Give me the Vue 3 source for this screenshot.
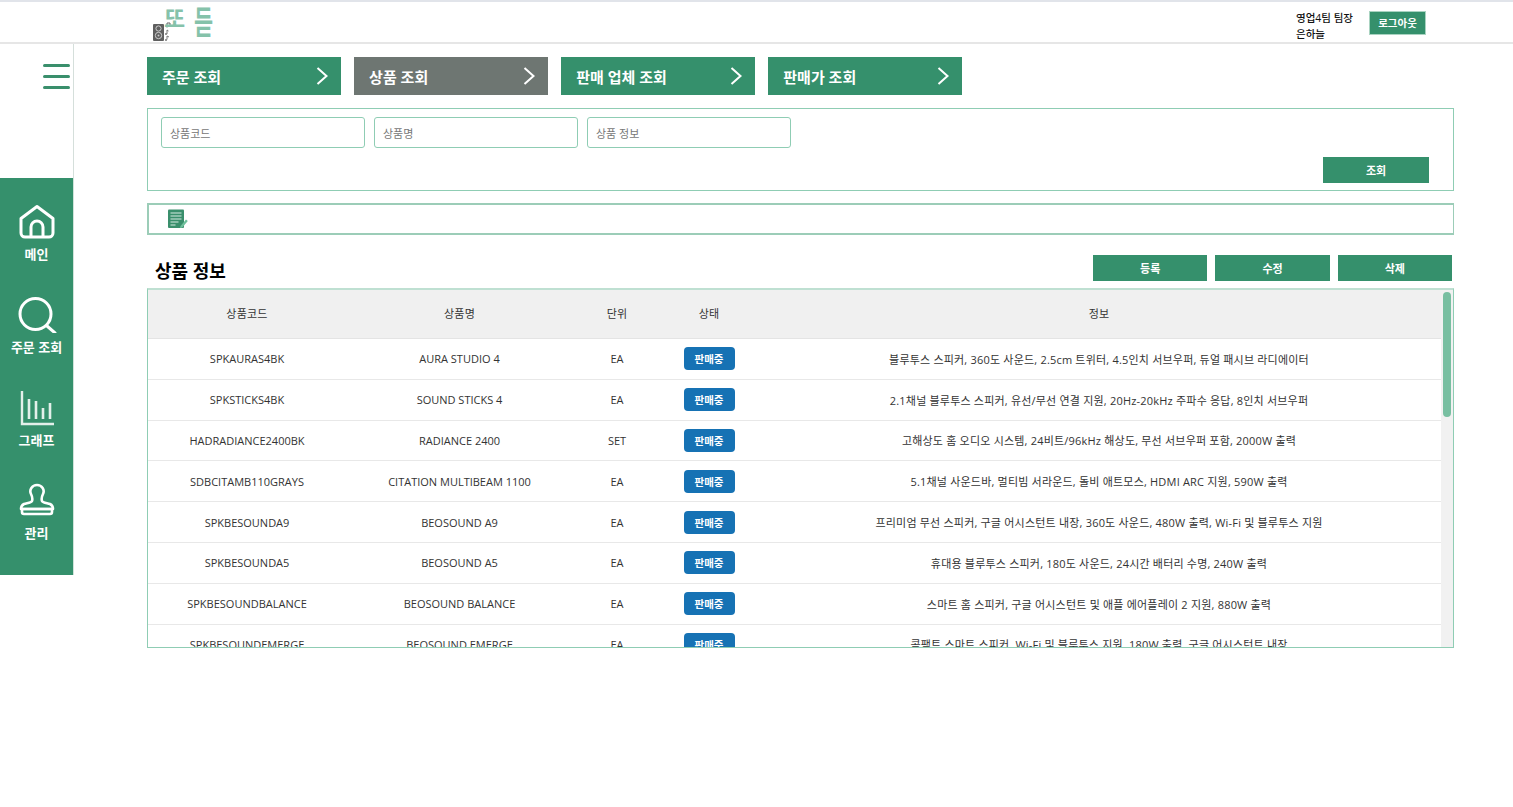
<template>
  <div class="page">
    <header class="topbar">
      <div class="logo">
        <svg class="speaker" width="34" height="20" viewBox="0 0 34 20">
          <rect x="0" y="2" width="11" height="17" rx="1" fill="#5f5f5f" />
          <circle cx="5.5" cy="6.5" r="2.6" fill="none" stroke="#ccc" stroke-width="1" />
          <circle cx="5.5" cy="13.5" r="3.2" fill="none" stroke="#ccc" stroke-width="1" />
          <circle cx="5.5" cy="13.5" r="1" fill="#ccc" />
          <path d="M14 3.5V1h3v2M14 3.5v2M17 3v2" fill="none" stroke="#666" stroke-width="1" />
          <path d="M14 8v4M14 8l1.5 1" fill="none" stroke="#777" stroke-width="1" />
          <path d="M14 14v3.5M14 14l2 1" fill="none" stroke="#777" stroke-width="1" />
          <circle cx="13" cy="12" r="1" fill="#777" />
          <circle cx="13" cy="18" r="1" fill="#777" />
        </svg>
        <span class="logo-a">또</span>
        <span class="logo-b">듣</span>
      </div>
      <div class="user">
        <div>영업4팀 팀장</div>
        <div>은하늘</div>
      </div>
      <button class="logout">로그아웃</button>
    </header>

    <div class="body">
      <aside class="side">
        <div class="side-top">
          <div class="burger"><i></i><i></i><i></i></div>
        </div>
        <nav class="side-nav">
          <a class="nav-item">
            <svg width="38" height="36" viewBox="0 0 38 36" fill="none" stroke="#fff" stroke-width="3" stroke-linejoin="round">
              <path d="M3 14.5 19 2.5l16 12V29a4 4 0 0 1-4 4H7a4 4 0 0 1-4-4Z" />
              <path d="M13 33V23a6 6 0 0 1 12 0v10" />
            </svg>
            <span>메인</span>
          </a>
          <a class="nav-item">
            <svg width="40" height="36" viewBox="0 0 40 36" fill="none" stroke="#fff" stroke-width="3" stroke-linecap="round">
              <circle cx="18.5" cy="17" r="15.5" />
              <path d="M30 29l8 7" />
            </svg>
            <span>주문 조회</span>
          </a>
          <a class="nav-item">
            <svg width="36" height="36" viewBox="0 0 36 36" fill="none" stroke="#e3f0ea" stroke-width="2.4">
              <path d="M3 1v33h32" />
              <path d="M10 9v20M17 11v18M24 18v11M31 13v16" stroke-width="2.6" />
            </svg>
            <span>그래프</span>
          </a>
          <a class="nav-item">
            <svg width="36" height="36" viewBox="0 3 36 36" fill="none" stroke="#fff" stroke-width="2.6" stroke-linejoin="round">
              <path d="M13 21c1-3 0-5-1-7-2-4 1-9 6-9s8 5 6 9c-1 2-2 4-1 7 1 2 5 2 8 3 2 1 3 3 3 5H2c0-2 1-4 3-5 3-1 7-1 8-3Z" />
              <path d="M3 29h30v3a2 2 0 0 1-2 2H5a2 2 0 0 1-2-2Z" />
            </svg>
            <span>관리</span>
          </a>
        </nav>
      </aside>

      <main class="content">
        <div class="tabs">
          <a v-for="tab in tabs" :key="tab" class="tab" :class="{ active: tab === '상품 조회' }">
            <span>{{ tab }}</span>
            <svg width="12" height="18" viewBox="0 0 12 18" fill="none" stroke="#fff" stroke-width="2">
              <path d="M1.5 1 10.5 9l-9 8" />
            </svg>
          </a>
        </div>

        <section class="search">
          <div class="inputs">
            <input placeholder="상품코드" />
            <input placeholder="상품명" />
            <input placeholder="상품 정보" />
          </div>
          <div class="search-foot">
            <button class="btn search-btn">조회</button>
          </div>
        </section>

        <section class="toolbar">
          <svg width="20" height="20" viewBox="0 0 20 20">
            <rect x="0" y="0.5" width="16" height="18.5" rx="1" fill="#3a8f6c" />
            <path d="M2.5 4h11M2.5 7h11M2.5 10h11M2.5 13h8M2.5 16h5" stroke="#d5ebe1" stroke-width="1.2" />
            <path d="M12.5 17l5.5-6.5 1.8 1.5-5.5 6.5-2.3.5Z" fill="#6fc09c" />
          </svg>
        </section>

        <div class="list-head">
          <h2>상품 정보</h2>
          <div class="actions">
            <button class="btn">등록</button>
            <button class="btn">수정</button>
            <button class="btn">삭제</button>
          </div>
        </div>

        <section class="grid">
          <div class="grid-scroll">
            <table>
              <colgroup>
                <col style="width: 198px" />
                <col style="width: 227px" />
                <col style="width: 88px" />
                <col style="width: 96px" />
                <col />
              </colgroup>
              <thead>
                <tr>
                  <th>상품코드</th>
                  <th>상품명</th>
                  <th>단위</th>
                  <th>상태</th>
                  <th>정보</th>
                </tr>
              </thead>
              <tbody>
                <tr v-for="row in rows" :key="row.code">
                  <td>{{ row.code }}</td>
                  <td>{{ row.name }}</td>
                  <td>{{ row.unit }}</td>
                  <td><span class="badge">판매중</span></td>
                  <td class="info">{{ row.info }}</td>
                </tr>
              </tbody>
            </table>
          </div>
          <div class="scrollbar"><div class="thumb"></div></div>
        </section>
      </main>
    </div>
  </div>
</template>

<script setup>
const tabs = ["주문 조회", "상품 조회", "판매 업체 조회", "판매가 조회"];

const rows = [
  { code: "SPKAURAS4BK", name: "AURA STUDIO 4", unit: "EA", info: "블루투스 스피커, 360도 사운드, 2.5cm 트위터, 4.5인치 서브우퍼, 듀얼 패시브 라디에이터" },
  { code: "SPKSTICKS4BK", name: "SOUND STICKS 4", unit: "EA", info: "2.1채널 블루투스 스피커, 유선/무선 연결 지원, 20Hz-20kHz 주파수 응답, 8인치 서브우퍼" },
  { code: "HADRADIANCE2400BK", name: "RADIANCE 2400", unit: "SET", info: "고해상도 홈 오디오 시스템, 24비트/96kHz 해상도, 무선 서브우퍼 포함, 2000W 출력" },
  { code: "SDBCITAMB110GRAYS", name: "CITATION MULTIBEAM 1100", unit: "EA", info: "5.1채널 사운드바, 멀티빔 서라운드, 돌비 애트모스, HDMI ARC 지원, 590W 출력" },
  { code: "SPKBESOUNDA9", name: "BEOSOUND A9", unit: "EA", info: "프리미엄 무선 스피커, 구글 어시스턴트 내장, 360도 사운드, 480W 출력, Wi-Fi 및 블루투스 지원" },
  { code: "SPKBESOUNDA5", name: "BEOSOUND A5", unit: "EA", info: "휴대용 블루투스 스피커, 180도 사운드, 24시간 배터리 수명, 240W 출력" },
  { code: "SPKBESOUNDBALANCE", name: "BEOSOUND BALANCE", unit: "EA", info: "스마트 홈 스피커, 구글 어시스턴트 및 애플 에어플레이 2 지원, 880W 출력" },
  { code: "SPKBESOUNDEMERGE", name: "BEOSOUND EMERGE", unit: "EA", info: "콤팩트 스마트 스피커, Wi-Fi 및 블루투스 지원, 180W 출력, 구글 어시스턴트 내장" }
];
</script>

<style>
html,
body {
  margin: 0;
  background: #fff;
}
</style>

<style scoped>
.page {
  width: 1513px;
  height: 807px;
  overflow: hidden;
  font-family: "Open Sans", "Noto Sans CJK KR", sans-serif;
  color: #222;
}

/* header */
.topbar {
  height: 40px;
  border-top: 2px solid #e1e4ea;
  border-bottom: 2px solid #e6e6e6;
  display: flex;
  align-items: center;
  padding-left: 153px;
  padding-right: 87px;
}

.logo {
  position: relative;
  width: 70px;
  height: 40px;
  flex: none;
}

.speaker {
  position: absolute;
  left: 0;
  top: 20px;
}

.logo-a,
.logo-b {
  position: absolute;
  font-weight: 700;
  color: #85c2aa;
  line-height: 1;
}

.logo-a {
  left: 11px;
  top: 5px;
  font-size: 23px;
}

.logo-b {
  left: 41px;
  top: 4px;
  font-size: 23px;
  transform: scale(0.9, 1.4);
  transform-origin: top left;
}

.user {
  margin-left: auto;
  margin-top: 7px;
  font-size: 10.5px;
  font-weight: 500;
  line-height: 16px;
  color: #111;
  width: 73px;
}

.logout {
  width: 57px;
  height: 24px;
  margin-top: 1px;
  border: 1px solid #a9d3c1;
  background: #35906c;
  color: #fff;
  font: 700 10.5px "Open Sans", "Noto Sans CJK KR", sans-serif;
  padding: 0;
}

/* sidebar */
.body {
  display: flex;
}

.side {
  width: 74px;
  flex: none;
}

.side-top {
  height: 134px;
  box-sizing: border-box;
  border-right: 1px solid #d5dfdb;
  display: flex;
  justify-content: flex-end;
  padding: 20px 3px 0 0;
}

.burger {
  width: 27px;
}

.burger i {
  display: block;
  height: 3px;
  border-radius: 2px;
  background: #3a8f6c;
  margin-bottom: 8px;
}

.side-nav {
  height: 397px;
  width: 74px;
  background: #35906c;
  border-right: 1px solid #cfe3da;
  padding-top: 26px;
  box-sizing: border-box;
  display: flex;
  flex-direction: column;
  gap: 26px;
}

.nav-item {
  display: flex;
  flex-direction: column;
  align-items: center;
  height: 67px;
  color: #fff;
  font-size: 13px;
  font-weight: 700;
  line-height: 18px;
}

.nav-item svg {
  flex: none;
  margin-bottom: 5px;
}

/* main */
.content {
  width: 1307px;
  margin-left: 73px;
  padding-top: 13px;
}

.tabs {
  display: flex;
  gap: 13.1px;
}

.tab {
  width: 194px;
  height: 38px;
  box-sizing: border-box;
  background: #35906c;
  color: #fff;
  display: flex;
  align-items: center;
  justify-content: space-between;
  padding: 0 13px 0 15px;
  font-size: 15px;
  font-weight: 700;
}

.tab.active {
  background: #6e7672;
}

.search {
  margin-top: 13px;
  height: 83px;
  box-sizing: border-box;
  border: 1px solid #8fcdb4;
  padding: 8px 24px 7px 13px;
}

.inputs {
  display: flex;
  gap: 9px;
}

.inputs input {
  width: 204px;
  height: 31px;
  box-sizing: border-box;
  border: 1px solid #8fcdb4;
  border-radius: 3px;
  padding: 2px 8px 0;
  font: 400 11px "Open Sans", "Noto Sans CJK KR", sans-serif;
  outline: none;
}

.inputs input::placeholder {
  color: #777;
}

.search-foot {
  display: flex;
  justify-content: flex-end;
  margin-top: 9px;
}

.btn {
  height: 26px;
  border: 0;
  padding: 0;
  background: #35906c;
  color: #fff;
  font: 700 11px "Open Sans", "Noto Sans CJK KR", sans-serif;
}

.search-btn {
  width: 106px;
}

.toolbar {
  margin-top: 12px;
  height: 32px;
  box-sizing: border-box;
  border: 2px solid #9ccdb8;
  border-right-width: 1px;
  padding: 4px 0 0 19px;
}

.list-head {
  margin-top: 20px;
  height: 33px;
  display: flex;
  justify-content: space-between;
  padding: 0 2px 0 8px;
}

.list-head h2 {
  margin: 0;
  padding-top: 3px;
  font-size: 18px;
  line-height: 26px;
  font-weight: 700;
  color: #000;
}

.actions {
  display: flex;
  gap: 8px;
}

.actions .btn {
  width: 114.33px;
}

.grid {
  height: 360px;
  box-sizing: border-box;
  border: 1px solid #8fcdb4;
  border-top: 2px solid #bfe0d2;
  display: flex;
}

.grid-scroll {
  flex: 1;
  overflow: hidden;
}

table {
  width: 100%;
  table-layout: fixed;
  border-collapse: collapse;
  font-size: 11px;
  text-align: center;
}

th {
  height: 46px;
  padding: 0 0 2px;
  background: #f0f0f0;
  font-weight: 400;
  color: #333;
  border-bottom: 1px solid #e4e4e4;
  letter-spacing: 0.2px;
}

td {
  height: 39.8px;
  padding: 0;
  color: #333;
  border-bottom: 1px solid #e8e8e8;
  white-space: nowrap;
}

td.info {
  letter-spacing: 0.2px;
}

.badge {
  display: inline-block;
  width: 51px;
  height: 23px;
  border-radius: 4px;
  background: #1672b4;
  color: #fff;
  font-size: 10.5px;
  font-weight: 700;
  line-height: 25px;
  vertical-align: middle;
}

.scrollbar {
  width: 12px;
  flex: none;
  background: #f1f1f1;
  padding: 2px 2px 0;
  box-sizing: border-box;
}

.thumb {
  height: 125px;
  border-radius: 4px;
  background: #78bfa1;
}
</style>
